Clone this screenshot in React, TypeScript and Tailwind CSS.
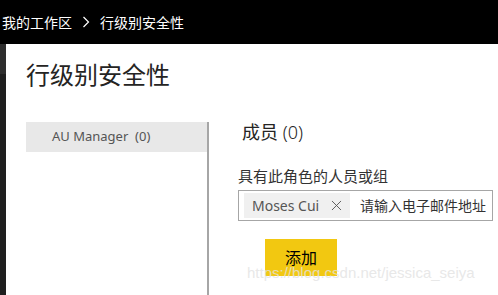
import { X } from 'lucide-react';

const font = { fontFamily: '"Noto Sans", "Noto Sans CJK SC", sans-serif' };

export default function App() {
  return (
    <div className="relative h-[295px] w-[498px] overflow-hidden bg-white text-[#252423]" style={font}>
      {/* breadcrumb bar */}
      <div className="flex h-[44px] items-center gap-[10px] bg-black pl-[2px] text-[14px] text-white">
        <span>我的工作区</span>
        <svg width="8" height="12" viewBox="0 0 8 12" fill="none">
          <path d="M1.5 1l5 5-5 5" stroke="#ffffff" strokeWidth="1.2" />
        </svg>
        <span>行级别安全性</span>
      </div>

      <div className="flex h-[251px]">
        {/* left rail */}
        <div className="flex w-[6px] flex-col">
          <div className="h-[30px] bg-[#2e2e2e]" />
          <div className="flex-1 bg-[#1f1f1f]" />
        </div>

        <div className="flex flex-1 flex-col">
          <h1 className="pl-[20px] pt-[15px] text-[24px] font-normal leading-[32px] text-[#252423]">行级别安全性</h1>

          <div className="mt-[31px] flex flex-1 pl-[20px]">
            {/* roles */}
            <div className="w-[181px]">
              <div className="flex h-[30px] items-center bg-[#e8e8e8] pl-[26px] text-[13px] text-[#555555]">
                AU Manager&nbsp;&nbsp;(0)
              </div>
            </div>

            {/* members */}
            <div className="flex-1 border-l-2 border-[#a6a6a6] pl-[29px]">
              <h2 className="pl-[4px] text-[18px] font-normal leading-[20px] text-[#252423]">
                成员 <span className="font-light">(0)</span>
              </h2>
              <div className="mt-[24px] text-[15px] leading-[20px] text-[#333333]">具有此角色的人员或组</div>
              <div className="mt-[4px] flex h-[31px] w-[255px] items-center gap-[10px] border border-[#a6a6a6] py-[2px] pl-[5px]">
                <div className="flex h-[25px] w-[106px] shrink-0 items-center justify-between bg-[#f0f0f0] pl-[8px] pr-[5px] text-[14px] text-[#555555]">
                  <span>Moses Cui</span>
                  <X size={17} strokeWidth={1.3} color="#555555" />
                </div>
                <span className="whitespace-nowrap text-[14px] text-[#333333]">请输入电子邮件地址</span>
              </div>
              <button className="ml-[27px] mt-[18px] flex h-[37px] w-[72px] items-center justify-center bg-[#f2c811] text-[16px] text-black">
                添加
              </button>
            </div>
          </div>
        </div>
      </div>

      {/* watermark */}
      <div
        className="pointer-events-none absolute left-[247px] top-[262px] whitespace-nowrap text-[15px] text-[#e2e2e2]/80"
        style={{ fontFamily: '"Liberation Sans", Arial, sans-serif' }}
      >
        https://blog.csdn.net/jessica_seiya
      </div>
    </div>
  );
}
